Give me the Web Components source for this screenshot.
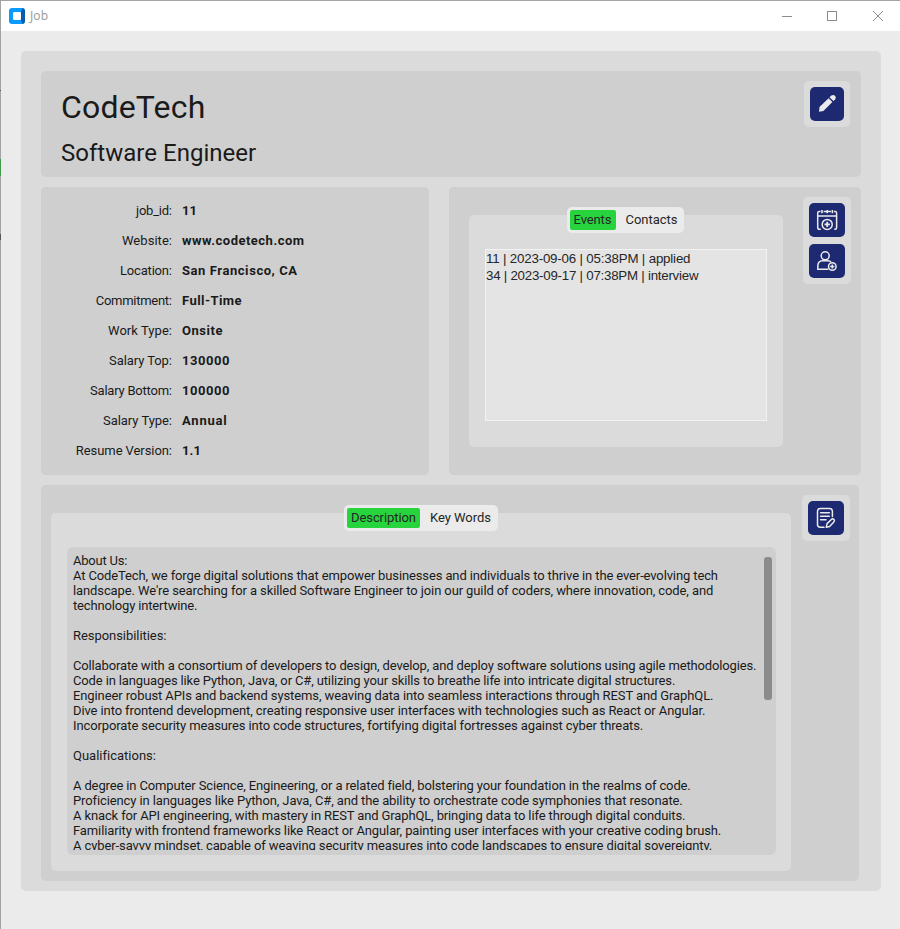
<!DOCTYPE html>
<html lang="en">
<head>
<meta charset="utf-8">
<title>Job</title>
<style>
  html, body { margin: 0; height: 100%; overflow: hidden; background: #ebebeb; }
  body { font-family: Roboto, "Liberation Sans", sans-serif; font-size: 13px; color: #1a1a1a; }
</style>
</head>
<body>
<job-window></job-window>
<script>
const define = (name, html, setup) => {
  const tpl = document.createElement('template');
  tpl.innerHTML = html.trim();
  customElements.define(name, class extends HTMLElement {
    connectedCallback() {
      if (this.shadowRoot) return;
      this.attachShadow({ mode: 'open' }).append(tpl.content.cloneNode(true));
      if (setup) setup(this, this.shadowRoot);
    }
  });
};

/* A single line of text, tracked so that it spans the width given in "w". */
define('text-run', `<style>
    :host { display: inline-block; }
    span { display: inline-block; white-space: pre; }
  </style><span><slot></slot></span>`,
  (el, root) => {
    const w = parseFloat(el.getAttribute('w'));
    const n = el.textContent.length;
    if (!w || n < 2) return;
    const span = root.querySelector('span');
    const natural = span.getBoundingClientRect().width;
    const gap = (w - natural) / (n - 1);
    span.style.letterSpacing = gap.toFixed(4) + 'px';
    span.style.marginRight = (-gap).toFixed(4) + 'px';
  });

define('ui-panel', `
  <style>
    :host { display: block; box-sizing: border-box; border-radius: 5px; background: var(--panel, #cfcfcf); }
  </style><slot></slot>`);

const ICONS = {
  pencil: `<path fill="#ebebeb" d="M9 24.8L9.5 20L18.6 11.2L22.4 15L13.4 23.9Z"/><path fill="#ebebeb" d="M19.5 10.3L21.3 8.6Q23.2 7.2 25 8.7Q26.6 10.6 25.2 12.3L23.4 14.1Z"/>`,
  calendar: `<g fill="none" stroke="#ebebeb" stroke-width="1.5"><path d="M11.5 8.6H10.2Q8.7 8.6 8.7 10.2V24.5Q8.7 26.3 10.6 26.3H11.8M25.2 26.3H26Q27.6 26.3 27.6 24.5V10.2Q27.6 8.6 26.2 8.6H25M8.8 13H27.5M14.6 8.6H22"/><path stroke-width="1.6" d="M13 7V10.2M18.2 7V10.2M23.4 7V10.2"/><circle cx="18.2" cy="21.4" r="5"/><path stroke-width="1.8" d="M18.2 18.7V24.1M15.5 21.4H20.9"/></g>`,
  person: `<g fill="none" stroke="#ebebeb" stroke-width="1.5"><circle cx="16.2" cy="11.8" r="4"/><path d="M19.4 25.2H8.8V21.5Q9.2 16.9 13.3 16.7H19Q20.9 16.8 22 18"/><circle cx="23.3" cy="22.5" r="3.8"/><path d="M23.3 20.4V24.6M21.2 22.5H25.4"/></g>`,
  note: `<g fill="none" stroke="#ebebeb" stroke-width="1.5" stroke-linecap="round" stroke-linejoin="round"><path d="M16 26.2H12.2Q9.5 26.2 9.5 23.5V10.3Q9.5 7.5 12.3 7.5H21.5Q24.4 7.5 24.4 10.3V15.4"/><path d="M12.6 11.7H21.3M12.6 15.2H21.3M12.6 18.7H18"/><path d="M18.3 26.2L19.1 22.6L23.6 18.2Q24.9 17.4 26 18.6Q27 19.8 25.8 21L21.6 25.4Z"/></g>`
};
define('icon-button', `
  <style>
    :host { display: block; width: 36px; height: 34px; border-radius: 5px; background: #1d2a72; }
    :host([icon="pencil"]) { width: 34px; }
    svg { display: block; }
  </style><svg height="34"></svg>`,
  (el, root) => {
    const svg = root.querySelector('svg');
    svg.setAttribute('width', el.getAttribute('icon') === 'pencil' ? 34 : 36);
    svg.innerHTML = ICONS[el.getAttribute('icon')];
  });

define('tool-box', `
  <style>
    :host { display: flex; flex-direction: column; gap: 7px; padding: 6px; border-radius: 5px; background: #dbdbdb; align-self: start; flex: none; }
  </style><slot></slot>`);

define('title-bar', `
  <style>
    :host { display: flex; align-items: center; height: 30px; padding: 0 16px 0 8px; background: #fff; }
    .logo { display: block; margin-top: -1px; }
    .name { font: 12px/16px "Open Sans", "Noto Sans", sans-serif; color: #999; margin-left: 5px; flex: 1; }
    .controls { display: block; }
  </style>
  <svg class="logo" width="16" height="16"><rect width="16" height="16" rx="3" fill="#0b9bff"/><path d="M12 4L13.5 0Q16 0.4 16 3V13Q16 15.6 13.5 16L12 12Z" fill="#0a5ca8"/><rect x="4" y="4" width="8" height="8" rx="1.3" fill="#fff"/></svg>
  <span class="name"><slot></slot></span>
  <svg class="controls" width="102" height="12" fill="none" stroke="#8c8c8c"><path d="M0 6.5H10"/><rect x="45.5" y="1.5" width="9" height="9"/><path d="M91 1L101 11M101 1L91 11"/></svg>`);

define('detail-row', `
  <style>
    :host { display: grid; grid-template-columns: 131px 1fr; column-gap: 10px; height: 30px; align-items: center; }
    .label { text-align: right; }
    .value { font-weight: 700; }
  </style><span class="label"><slot name="label"></slot></span><span class="value"><slot></slot></span>`);

define('tab-strip', `
  <style>
    :host { display: flex; box-sizing: border-box; width: max-content; height: 26px; padding: 3px; border-radius: 5px; background: #ebebeb; }
  </style><slot></slot>`);
define('tab-item', `
  <style>
    :host { display: flex; align-items: center; box-sizing: border-box; height: 20px; padding: 0 4px 2px; border-radius: 2px; color: #262626; }
    :host([selected]) { background: #28d43e; margin-right: 6px; }
  </style><slot></slot>`);

/* Tabbed frame: the strip straddles the frame's upper edge. */
define('tab-view', `
  <style>
    :host { display: flex; flex-direction: column; align-items: center; box-sizing: border-box; }
    .strip { z-index: 1; height: 26px; margin-bottom: -18px; position: relative; }
    .frame { align-self: stretch; flex: 1; box-sizing: border-box; border-radius: 5px; background: #dbdbdb; padding: var(--tab-pad); }
  </style>
  <div class="strip"><slot name="strip"></slot></div>
  <div class="frame"><slot></slot></div>`);

define('list-box', `
  <style>
    :host { display: flex; flex-direction: column; box-sizing: border-box; height: 172px; border: 1px solid #f2f2f2; background: #e4e4e4; color: #262626;
      font: 13.3px/17px "Liberation Sans", Arial, sans-serif; }
    ::slotted(text-run) { height: 17px; }
  </style><slot></slot>`);

define('text-box', `
  <style>
    :host { display: flex; justify-content: space-between; box-sizing: border-box; height: 308px; padding: 6px 4px 5px 6px; border-radius: 6px; background: #cfcfcf; }
    .lines { height: 297px; overflow: hidden; line-height: 15px; display: flex; flex-direction: column; align-items: flex-start; }
    ::slotted(text-run) { flex: none; height: 15px; }
    .thumb { width: 8px; height: 143px; margin-top: 4px; border-radius: 3px; background: #8b8b8b; }
  </style>
  <div class="lines"><slot></slot></div><div class="thumb"></div>`);

const details = [
  ['job_id:', 36, '11', 15], ['Website:', 50, 'www.codetech.com', 122],
  ['Location:', 52, 'San Francisco, CA', 115], ['Commitment:', 76.3, 'Full-Time', 59.5],
  ['Work Type:', 64, 'Onsite', 40.5], ['Salary Top:', 63, '130000', 47.5],
  ['Salary Bottom:', 82, '100000', 47.5], ['Salary Type:', 69, 'Annual', 44.7],
  ['Resume Version:', 96.2, '1.1', 19]
];
const lines = [
  ['About Us:', 54.5],
  ['At CodeTech, we forge digital solutions that empower businesses and individuals to thrive in the ever-evolving tech', 645],
  ['landscape. We\'re searching for a skilled Software Engineer to join our guild of coders, where innovation, code, and', 640.3],
  ['technology intertwine.', 124.5], ['', 0],
  ['Responsibilities:', 93.5], ['', 0],
  ['Collaborate with a consortium of developers to design, develop, and deploy software solutions using agile methodologies.', 683.5],
  ['Code in languages like Python, Java, or C#, utilizing your skills to breathe life into intricate digital structures.', 602.3],
  ['Engineer robust APIs and backend systems, weaving data into seamless interactions through REST and GraphQL.', 640.5],
  ['Dive into frontend development, creating responsive user interfaces with technologies such as React or Angular.', 632.5],
  ['Incorporate security measures into code structures, fortifying digital fortresses against cyber threats.', 570.3],
  ['', 0], ['Qualifications:', 82.5], ['', 0],
  ['A degree in Computer Science, Engineering, or a related field, bolstering your foundation in the realms of code.', 617.3],
  ['Proficiency in languages like Python, Java, C#, and the ability to orchestrate code symphonies that resonate.', 609.3],
  ['A knack for API engineering, with mastery in REST and GraphQL, bringing data to life through digital conduits.', 612.5],
  ['Familiarity with frontend frameworks like React or Angular, painting user interfaces with your creative coding brush.', 648.3],
  ['A cyber-savvy mindset, capable of weaving security measures into code landscapes to ensure digital sovereignty.', 639.3]
];
const run = (t, w) => `<text-run w="${w}">${t}</text-run>`;

define('job-window', `
  <style>
    :host { display: flex; flex-direction: column; box-sizing: border-box; width: 900px; height: 929px; padding: 1px 0 0 1px;
      background: linear-gradient(#ebebeb, #ebebeb) content-box,
        linear-gradient(transparent 90px, #555 90px 91px, transparent 91px 159px, #3f9a4a 159px 176px, transparent 176px 234px, #555 234px 240px, transparent 240px) 0 0 / 1px 100% no-repeat #a3a3a3; }
    .outer { --panel: #dbdbdb; margin: 20px 19px 0 20px; height: 840px; padding: 20px 20px 10px; display: flex; flex-direction: column; gap: 10px; }
    .outer > *, .row > ui-panel { --panel: #cfcfcf; }
    .head { display: flex; height: 106px; padding: 10px 11px 0 20px; }
    .titles { flex: 1; display: flex; flex-direction: column; align-items: flex-start; }
    .company { font-size: 32px; line-height: 38px; margin-top: 7px; }
    .role { font-size: 24px; line-height: 28px; margin-top: 13px; }
    .row { display: flex; gap: 20px; height: 288px; }
    .details { width: 388px; padding-top: 8px; }
    .events { flex: 1; display: flex; justify-content: space-between; padding: 10px 10px 0 20px; }
    .events tab-view { --tab-pad: 34px 16px 0; width: 314px; height: 240px; margin-top: 10px; }
    .events tab-strip { margin-right: 1px; }
    .desc { display: flex; justify-content: space-between; width: 818px; height: 396px; padding: 10px 9px 10px 10px; }
    .desc tab-view { --tab-pad: 34px 15px 0 16px; width: 740px; height: 366px; margin-top: 10px; }
  </style>
  <title-bar>${run('Job', 18)}</title-bar>
  <ui-panel class="outer">
    <ui-panel class="head">
      <div class="titles"><div class="company">${run('CodeTech', 144.3)}</div><div class="role">${run('Software Engineer', 195.2)}</div></div>
      <tool-box><icon-button icon="pencil"></icon-button></tool-box>
    </ui-panel>
    <div class="row">
      <ui-panel class="details">${details.map(([l, lw, v, vw]) => `<detail-row><span slot="label">${run(l, lw)}</span>${run(v, vw)}</detail-row>`).join('')}</ui-panel>
      <ui-panel class="events">
        <tab-view>
          <tab-strip slot="strip"><tab-item selected>${run('Events', 38)}</tab-item><tab-item>${run('Contacts', 52)}</tab-item></tab-strip>
          <list-box>${run('11 | 2023-09-06 | 05:38PM | applied', 204.5)}${run('34 | 2023-09-17 | 07:38PM | interview', 212.5)}</list-box>
        </tab-view>
        <tool-box><icon-button icon="calendar"></icon-button><icon-button icon="person"></icon-button></tool-box>
      </ui-panel>
    </div>
    <ui-panel class="desc">
      <tab-view>
        <tab-strip slot="strip"><tab-item selected>${run('Description', 65)}</tab-item><tab-item>${run('Key Words', 61)}</tab-item></tab-strip>
        <text-box>${lines.map(([t, w]) => run(t, w)).join('')}</text-box>
      </tab-view>
      <tool-box><icon-button icon="note"></icon-button></tool-box>
    </ui-panel>
  </ui-panel>`);
</script>
</body>
</html>
